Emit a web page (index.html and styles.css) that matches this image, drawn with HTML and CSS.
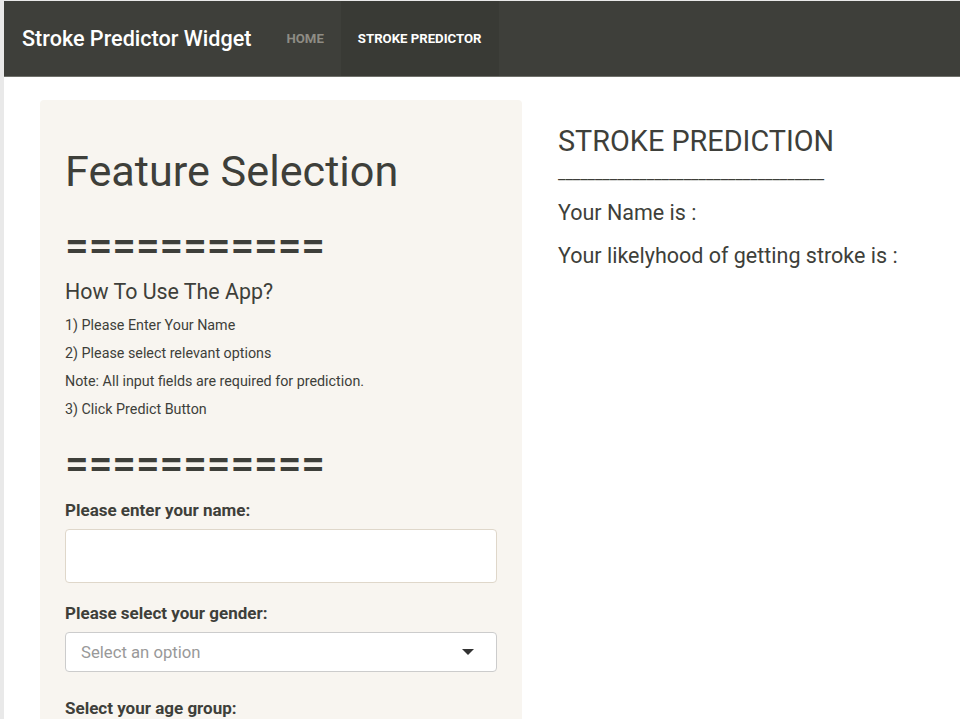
FILE: index.html
```html
<!DOCTYPE html>
<html>
<head>
<meta charset="utf-8">
<link rel="stylesheet" href="styles.css">
</head>
<body>
<nav class="navbar">
  <div class="brand">Stroke Predictor Widget</div>
  <ul class="nav">
    <li class="nav-item">Home</li>
    <li class="nav-item active">Stroke Predictor</li>
  </ul>
</nav>
<main class="container">
  <section class="well">
    <h1 class="title">Feature Selection</h1>
    <div class="equals">===========</div>
    <h4 class="howto">How To Use The App?</h4>
    <div class="steps">
      <p class="step">1) Please Enter Your Name</p>
      <p class="step">2) Please select relevant options</p>
      <p class="step">Note: All input fields are required for prediction.</p>
      <p class="step">3) Click Predict Button</p>
    </div>
    <div class="equals second">===========</div>
    <label class="label first">Please enter your name:</label>
    <div class="input"></div>
    <label class="label">Please select your gender:</label>
    <div class="select">
      <span class="placeholder">Select an option</span>
      <span class="caret"></span>
    </div>
    <label class="label age">Select your age group:</label>
  </section>
  <section class="result">
    <h3 class="result-title">STROKE PREDICTION</h3>
    <div class="rule">____________________________________</div>
    <p class="result-line name">Your Name is :</p>
    <p class="result-line">Your likelyhood of getting stroke is :</p>
  </section>
</main>
</body>
</html>
```

FILE: styles.css
```css
html, body {
  margin: 0;
  padding: 0;
}
body {
  background: #ffffff;
  font-family: Roboto, "Liberation Sans", sans-serif;
  color: #3e3f3a;
  border-left: 4px solid #e9e9e9;
  border-top: 1px solid #e9e9e9;
  height: 718px;
  overflow: hidden;
}
.navbar {
  display: flex;
  align-items: stretch;
  height: 75px;
  background: #3e3f3a;
  border-bottom: 1px solid #6f706a;
}
.brand {
  display: flex;
  align-items: center;
  padding: 0 18px 0 18px;
  color: #ffffff;
  font-size: 21.6px;
  font-weight: 500;
}
.nav {
  display: flex;
  list-style: none;
  margin: 0;
  padding: 0;
}
.nav-item {
  display: flex;
  align-items: center;
  padding: 0 17px;
  font-size: 13.2px;
  font-weight: 700;
  text-transform: uppercase;
  color: #8e8c84;
}
.nav-item.active {
  background: #393a35;
  color: #ffffff;
}
.container {
  display: flex;
  padding: 23px 0 0 36px;
  gap: 36px;
}
.well {
  width: 432px;
  height: 700px;
  flex: none;
  background: #f8f5f0;
  border-radius: 4px;
  padding: 0 25px;
  display: flex;
  flex-direction: column;
}
.title {
  margin: 42px 0 0;
  font-size: 43.2px;
  font-weight: 400;
  line-height: 60px;
}
.equals {
  margin-top: 24px;
  font-size: 42px;
  line-height: 40px;
  font-weight: 500;
}
.howto {
  margin: 11px 0 0;
  font-size: 21.4px;
  font-weight: 400;
  line-height: 30px;
}
.steps {
  margin-top: 4px;
}
.step {
  margin: 0;
  font-size: 14.3px;
  line-height: 28px;
}
.equals.second {
  margin-top: 21px;
}
.label {
  display: block;
  margin-top: 20px;
  font-size: 17px;
  font-weight: 700;
  line-height: 20px;
}
.label.first {
  margin-top: 16px;
}
.label.age {
  margin-top: 26px;
}
.input {
  margin-top: 9px;
  height: 54px;
  box-sizing: border-box;
  background: #ffffff;
  border: 1px solid #dfd7ca;
  border-radius: 4px;
}
.select {
  margin-top: 9px;
  height: 40px;
  box-sizing: border-box;
  background: #ffffff;
  border: 1px solid #cccccc;
  border-radius: 4px;
  display: flex;
  align-items: center;
  justify-content: space-between;
  padding: 0 22px 0 15px;
}
.placeholder {
  color: #999999;
  font-size: 16.7px;
}
.caret {
  width: 0;
  height: 0;
  border-left: 6px solid transparent;
  border-right: 6px solid transparent;
  border-top: 6px solid #333333;
}
.result {
  padding-top: 24px;
}
.result-title {
  margin: 0;
  font-size: 28.8px;
  font-weight: 400;
  line-height: 34px;
}
.rule {
  margin-top: 6px;
  font-size: 16.4px;
  line-height: 20px;
  color: #3e3f3a;
}
.result-line {
  margin: 15px 0 0;
  font-size: 21.5px;
  line-height: 28px;
}
.result-line.name {
  margin-top: 15px;
}
```
